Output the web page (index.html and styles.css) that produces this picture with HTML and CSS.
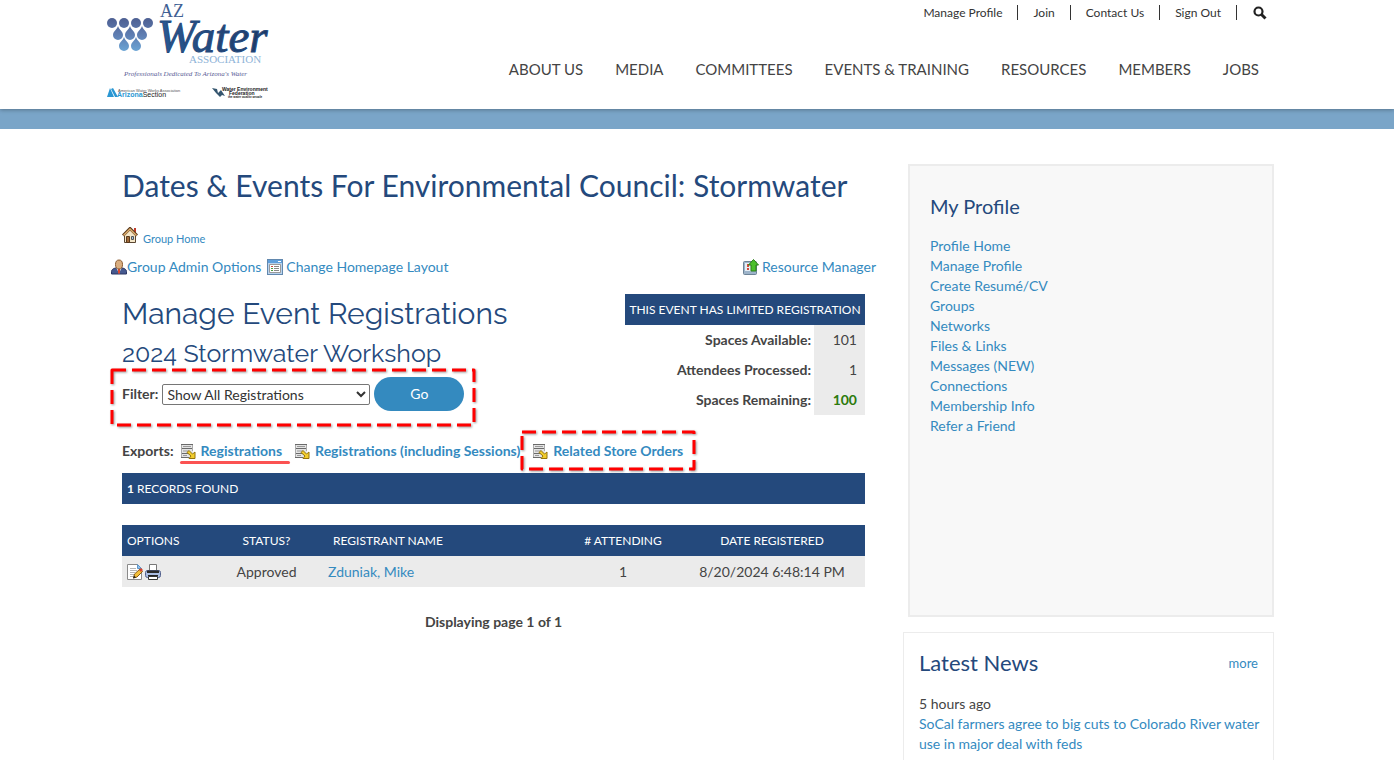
FILE: index.html
```html
<!DOCTYPE html>
<html lang="en">
<head>
    <meta charset="UTF-8">
    <meta name="viewport" content="width=device-width, initial-scale=1.0">
    <title>Manage Event Registrations - AZ Water Association</title>
    <link rel="stylesheet" href="styles.css">
</head>
<body>

    <!-- shared icons -->
    <svg class="sprite" width="0" height="0" aria-hidden="true">
        <defs>
            <linearGradient id="drop-grad" gradientUnits="userSpaceOnUse" x1="0" y1="18" x2="0" y2="52">
                <stop offset="0" stop-color="#4d5f92"/>
                <stop offset="0.5" stop-color="#5f7eb2"/>
                <stop offset="1" stop-color="#6ba6d6"/>
            </linearGradient>
            <linearGradient id="word-grad" x1="0" y1="0" x2="1" y2="0">
                <stop offset="0" stop-color="#2a5a94"/>
                <stop offset="1" stop-color="#1d3763"/>
            </linearGradient>
            <symbol id="icon-export" viewBox="0 0 16 16">
                <path d="M1 1h12v4H1zM1 6h12v4H1zM1 11h12v4H1z" fill="#e4e4e4"/>
                <path d="M1 1.500h12M1 5.500h12M1 10.500h10M1 14.500h8" stroke="#6a6a6a"/>
                <path d="M3 3.500h8M3 8h6M3 12.500h4" stroke="#999"/>
                <path d="M1.500 2v12M12.500 2v6" stroke="#aaa"/>
                <path d="M7 9.500l2-2 3.500 3.500 2.500-2v6.500H9l2-2.500z" fill="#f2cd2c" stroke="#94740c"/>
            </symbol>
        </defs>
    </svg>

    <header class="header">
        <div class="container header-inner">
            <a href="#" class="logo" aria-label="AZ Water Association">
                <svg width="162" height="98" viewBox="0 0 162 98">
                    <g fill="url(#drop-grad)">
                        <circle cx="5" cy="23" r="5"/>
                        <circle cx="17" cy="23" r="5"/>
                        <circle cx="29" cy="23" r="5"/>
                        <circle cx="41" cy="23" r="5"/>
                        <path d="M11 26c1 4 5 5 5 9a5 5 0 0 1-10 0c0-4 4-5 5-9z"/>
                        <path d="M23 26c1 4 5 5 5 9a5 5 0 0 1-10 0c0-4 4-5 5-9z"/>
                        <path d="M35 26c1 4 5 5 5 9a5 5 0 0 1-10 0c0-4 4-5 5-9z"/>
                        <path d="M17 37c1 4 5 5 5 9a5 5 0 0 1-10 0c0-4 4-5 5-9z"/>
                        <path d="M29 37c1 4 5 5 5 9a5 5 0 0 1-10 0c0-4 4-5 5-9z"/>
                    </g>
                    <text x="53" y="17" class="logo-az">AZ</text>
                    <text x="50" y="52" class="logo-water" fill="url(#word-grad)">Water</text>
                    <text x="82" y="63" class="logo-assoc">ASSOCIATION</text>
                    <text x="17" y="76" class="logo-tag">Professionals Dedicated To Arizona's Water</text>
                    <path d="M0 97l3-9 4 9zM4 89l2-1 5 9h-3z" fill="#2a97d3"/>
                    <text x="11" y="92" class="logo-tiny">American Water Works Association</text>
                    <text x="10" y="97" class="logo-section"><tspan class="logo-arizona">Arizona</tspan>Section</text>
                    <path d="M105 88l5 1 1 4 3-3 4 6-3-1-2 2-4-4z" fill="#35566f"/>
                    <text x="115" y="91" class="logo-wef">Water Environment</text>
                    <text x="122" y="95" class="logo-wef">Federation</text>
                    <text x="121" y="98" class="logo-wef-small">the water quality people</text>
                </svg>
            </a>

            <div class="header-menus">
                <nav class="top-links" aria-label="Account">
                    <a href="#">Manage Profile</a>
                    <a href="#">Join</a>
                    <a href="#">Contact Us</a>
                    <a href="#">Sign Out</a>
                    <button type="button" class="search-btn" aria-label="Search">
                        <svg width="14" height="14" viewBox="0 0 14 14" fill="none" stroke="#222">
                            <circle cx="5.500" cy="5.500" r="4" stroke-width="2.200"/>
                            <path d="M8.500 8.500l4 4" stroke-width="3"/>
                        </svg>
                    </button>
                </nav>
                <nav class="main-nav" aria-label="Main">
                    <a href="#">ABOUT US</a>
                    <a href="#">MEDIA</a>
                    <a href="#">COMMITTEES</a>
                    <a href="#">EVENTS &amp; TRAINING</a>
                    <a href="#">RESOURCES</a>
                    <a href="#">MEMBERS</a>
                    <a href="#">JOBS</a>
                </nav>
            </div>
        </div>
    </header>
    <div class="band"></div>

    <div class="container page">
        <main class="content">
            <h1>Dates &amp; Events For Environmental Council: Stormwater</h1>

            <a href="#" class="group-home">
                <svg class="icon" viewBox="0 0 16 16">
                    <path d="M12 1h2v6h-2z" fill="#c03a2b"/>
                    <path d="M2.500 8L8 3l5.500 5v7.500h-11z" fill="#f4e6c8" stroke="#5a4632"/>
                    <path d="M1 8.500L8 1.500l7 7" fill="none" stroke="#5a3a1c" stroke-width="3"/>
                    <path d="M1.500 8.500L8 2l6.500 6.500" fill="none" stroke="#e0b070" stroke-width="1.500"/>
                    <path d="M4.500 9.500h3v6h-3z" fill="#a06a3a" stroke="#5a3a1c"/>
                    <path d="M9.500 9.500h2v3h-2z" fill="#9cc4ec" stroke="#555"/>
                </svg>
                Group Home
            </a>

            <div class="toolbar">
                <a href="#" class="admin-link">
                    <svg class="icon" viewBox="0 0 16 16">
                        <path d="M0.500 15v-2.500c0-2 2-3 4-3.500h7c2 0.500 4 1.500 4 3.500V15z" fill="#46598f" stroke="#2b3663"/>
                        <path d="M5.500 9h5L8 14.500z" fill="#fff"/>
                        <path d="M8 9.500v5" stroke="#e0482c" stroke-width="2"/>
                        <ellipse cx="8" cy="5.500" rx="3.500" ry="4.500" fill="#d9ae80" stroke="#8a5a30"/>
                    </svg>Group Admin Options</a>
                <a href="#" class="layout-link">
                    <svg class="icon" viewBox="0 0 16 16">
                        <rect x="0.500" y="0.500" width="15" height="15" fill="#b9d3ee" stroke="#6288ae"/>
                        <path d="M1 1h14v3H1z" fill="#5f9fdc"/>
                        <path d="M11 2.500h3" stroke="#fff"/>
                        <path d="M2.500 5.500h11v8h-11z" fill="#fff" stroke="#9a9a9a"/>
                        <path d="M4 7.500h2" stroke="#d34a3a"/>
                        <path d="M4 9.500h2M4 11.500h2" stroke="#4b9c3c"/>
                        <path d="M7 7.500h5M7 9.500h5M7 11.500h5" stroke="#888"/>
                    </svg>Change Homepage Layout</a>
                <a href="#" class="resource-link">
                    <svg class="icon" viewBox="0 0 16 16">
                        <rect x="0.500" y="2.500" width="13" height="13" rx="1" fill="#9db4ca" stroke="#6d8397"/>
                        <path d="M2 4h8v8H2z" fill="#e7eef4"/>
                        <path d="M5 5v3M5 9v2" stroke="#d34a3a" stroke-width="2"/>
                        <path d="M10.500 0.500l5 5.500h-2.500v6h-5v-6h-2.500z" fill="#4cc02c" stroke="#2a7f18"/>
                    </svg>Resource Manager</a>
            </div>

            <div class="event-top">
                <div class="event-info">
                    <h2>Manage Event Registrations</h2>
                    <h3>2024 Stormwater Workshop</h3>
                    <form class="filter" onsubmit="return false">
                        <label for="filter">Filter:</label>
                        <select id="filter">
                            <option>Show All Registrations</option>
                            <option>Approved Registrations</option>
                            <option>Pending Registrations</option>
                        </select>
                        <button type="submit" class="go-btn">Go</button>
                        <svg class="marker marker-filter" aria-hidden="true"><rect x="2" y="2"/></svg>
                    </form>
                </div>

                <table class="spaces">
                    <thead>
                        <tr><th colspan="2">THIS EVENT HAS LIMITED REGISTRATION</th></tr>
                    </thead>
                    <tbody>
                        <tr><th scope="row">Spaces Available:</th><td>101</td></tr>
                        <tr><th scope="row">Attendees Processed:</th><td>1</td></tr>
                        <tr><th scope="row">Spaces Remaining:</th><td class="remaining">100</td></tr>
                    </tbody>
                </table>
            </div>

            <div class="exports">
                <span>Exports:</span>
                <a href="#" class="underlined"><svg class="icon"><use href="#icon-export"/></svg>Registrations</a>
                <a href="#"><svg class="icon"><use href="#icon-export"/></svg>Registrations (including Sessions)</a>
                <a href="#" class="orders"><svg class="icon"><use href="#icon-export"/></svg>Related Store Orders<svg class="marker marker-orders" aria-hidden="true"><rect x="2" y="2"/></svg></a>
            </div>

            <div class="records"><b>1</b> RECORDS FOUND</div>

            <table class="registrants">
                <thead>
                    <tr>
                        <th class="col-options">OPTIONS</th>
                        <th class="col-status">STATUS?</th>
                        <th class="col-name">REGISTRANT NAME</th>
                        <th class="col-attending"># ATTENDING</th>
                        <th class="col-date">DATE REGISTERED</th>
                    </tr>
                </thead>
                <tbody>
                    <tr>
                        <td class="col-options">
                            <div class="options">
                                <a href="#" aria-label="Edit">
                                    <svg class="icon" viewBox="0 0 16 16">
                                        <path d="M0.500 0.500h10l4 4v11h-14z" fill="#fff" stroke="#8a8a8a"/>
                                        <path d="M10.500 0.500v4h4z" fill="#8ec1ee" stroke="#5f95c8"/>
                                        <path d="M3 4.500h6M3 6.500h7M3 8.500h5M3 10.500h4M3 12.500h3" stroke="#b5b5b5"/>
                                        <path d="M6.500 14l1-4 5.500-5 2.500 2.500-5.500 5.500z" fill="#f3bf3a" stroke="#8a5a14"/>
                                        <path d="M12 6l2-2 2 2-2 2z" fill="#d9452e"/>
                                        <path d="M6 14.500l1-3 2 2z" fill="#222"/>
                                    </svg>
                                </a>
                                <a href="#" aria-label="Print">
                                    <svg class="icon" viewBox="0 0 16 16">
                                        <path d="M4.500 0.500h7v7h-7z" fill="#fff" stroke="#777"/>
                                        <rect x="0.500" y="6.500" width="15" height="7" rx="2" fill="#a9bce2" stroke="#53618c"/>
                                        <path d="M2 6.500h12v2.500H2z" fill="#2a2a2a"/>
                                        <path d="M3 11h10v1.500H3z" fill="#222"/>
                                        <path d="M3.500 12.500h9v3h-9z" fill="#fff" stroke="#333"/>
                                    </svg>
                                </a>
                            </div>
                        </td>
                        <td class="col-status">Approved</td>
                        <td class="col-name"><a href="#">Zduniak, Mike</a></td>
                        <td class="col-attending">1</td>
                        <td class="col-date">8/20/2024 6:48:14 PM</td>
                    </tr>
                </tbody>
            </table>

            <p class="paging">Displaying page 1 of 1</p>
        </main>

        <aside class="sidebar">
            <section class="profile">
                <h4>My Profile</h4>
                <ul>
                    <li><a href="#">Profile Home</a></li>
                    <li><a href="#">Manage Profile</a></li>
                    <li><a href="#">Create Resumé/CV</a></li>
                    <li><a href="#">Groups</a></li>
                    <li><a href="#">Networks</a></li>
                    <li><a href="#">Files &amp; Links</a></li>
                    <li><a href="#">Messages (NEW)</a></li>
                    <li><a href="#">Connections</a></li>
                    <li><a href="#">Membership Info</a></li>
                    <li><a href="#">Refer a Friend</a></li>
                </ul>
            </section>

            <section class="news">
                <div class="news-head">
                    <h4>Latest News</h4>
                    <a href="#">more</a>
                </div>
                <div>5 hours ago</div>
                <a href="#">SoCal farmers agree to big cuts to Colorado River water use in major deal with feds</a>
            </section>
        </aside>
    </div>

</body>
</html>
```
FILE: styles.css
```css
* {
    box-sizing: border-box;
}

body {
    margin: 0;
    font-family: Lato, "Liberation Sans", sans-serif;
    font-size: 14px;
    line-height: 20px;
    color: #444;
    background-color: #fff;
}

a {
    color: #348abf;
    text-decoration: none;
}

h1, h2, h3, h4 {
    margin: 0;
    font-weight: 400;
    color: #24497c;
}

.sprite {
    display: block;
}

.icon {
    width: 16px;
    height: 16px;
    flex: none;
}

.container {
    max-width: 1180px;
    margin: 0 auto;
}

/* header */
.header {
    position: relative;
    box-shadow: 0 1px 4px rgba(0, 0, 0, 0.3);
}

.header-inner {
    display: flex;
    justify-content: space-between;
    height: 109px;
    padding-right: 20px;
}

.logo svg {
    display: block;
}

.logo-az {
    font: 18px "Liberation Serif", serif;
    fill: #3f5f94;
}

.logo-water {
    font: italic 47px "Liberation Serif", serif;
    stroke: #24497c;
}

.logo-assoc {
    font: 11px "Liberation Serif", serif;
    fill: #8fb4d8;
}

.logo-tag {
    font: italic 7px "Liberation Serif", serif;
    fill: #5a6096;
}

.logo-tiny {
    font: 4px "Liberation Sans", sans-serif;
    fill: #555;
}

.logo-section {
    font: 7px "Liberation Sans", sans-serif;
    fill: #222;
}

.logo-arizona {
    font-weight: bold;
    fill: #2a97d3;
}

.logo-wef {
    font: bold 5px "Liberation Sans", sans-serif;
    fill: #222;
}

.logo-wef-small {
    font: bold 3px "Liberation Sans", sans-serif;
    fill: #222;
}

.header-menus {
    display: flex;
    flex-direction: column;
    align-items: flex-end;
}

.top-links {
    display: flex;
    align-items: center;
    padding-top: 5px;
    font-size: 12px;
    line-height: 15px;
}

.top-links a {
    padding: 0 15px;
    color: #333;
    border-right: 1px solid #333;
}

.search-btn {
    padding: 0 0 0 16px;
    border: 0;
    background: none;
    cursor: pointer;
}

.search-btn svg {
    display: block;
}

.main-nav {
    display: flex;
    gap: 32px;
    margin-top: 39px;
    padding-right: 8px;
    font-size: 15px;
}

.main-nav a {
    color: #444;
}

.band {
    height: 20px;
    background-color: #7aa5c8;
}

/* page columns */
.page {
    display: flex;
    gap: 27px;
    padding-right: 13px;
}

.content {
    flex: 1;
    padding: 36px 0 0 15px;
}

h1 {
    font-size: 30px;
    line-height: 40px;
}

.group-home {
    display: flex;
    gap: 5px;
    margin-top: 22px;
    font-size: 11px;
    line-height: 24px;
}

.toolbar {
    display: flex;
    margin: 6px 0 0 -11px;
}

.toolbar a {
    display: flex;
    align-items: center;
}

.layout-link {
    gap: 3px;
    margin-left: 6px;
}

.resource-link {
    gap: 3px;
    margin-left: auto;
}

.event-top {
    display: flex;
    justify-content: space-between;
    margin: 17px 11px 0 0;
}

h2 {
    font-family: Raleway, Lato, sans-serif;
    font-size: 30px;
    line-height: 40px;
}

h3 {
    font-family: Raleway, Lato, sans-serif;
    font-size: 25px;
    line-height: 38px;
}

.filter {
    position: relative;
    display: flex;
    align-items: center;
    gap: 4px;
    margin-top: 5px;
}

.filter label {
    font-weight: bold;
}

.filter select {
    width: 208px;
    height: 21px;
    padding: 0;
    border: 1px solid #767676;
    border-radius: 2px;
    font: inherit;
    color: #333;
    background-color: #fff;
}

.go-btn {
    width: 90px;
    height: 34px;
    border: 0;
    border-radius: 17px;
    font: inherit;
    color: #fff;
    background-color: #348abf;
    cursor: pointer;
}

/* red dashed callouts */
.marker {
    position: absolute;
    filter: drop-shadow(1px 1px 1px rgba(0, 0, 0, 0.4));
}

.marker rect {
    width: calc(100% - 5px);
    height: calc(100% - 5px);
    fill: none;
    stroke: #f00;
    stroke-width: 3px;
    stroke-dasharray: 14px 6px;
    stroke-linejoin: round;
}

.marker-filter {
    top: -9px;
    left: -12px;
    width: 367px;
    height: 60px;
}

.marker-orders {
    top: -11px;
    left: -12px;
    width: 177px;
    height: 42px;
}

.spaces {
    width: 240px;
    border-collapse: collapse;
    text-align: right;
}

.spaces th {
    padding: 5px 3px;
}

.spaces thead th {
    height: 31px;
    padding: 0;
    font-size: 12px;
    font-weight: 400;
    text-align: center;
    color: #fff;
    background-color: #24497c;
}

.spaces td {
    width: 51px;
    padding: 5px 8px;
    background-color: #ebebeb;
}

.spaces .remaining {
    font-weight: bold;
    color: #2c7a0c;
}

.exports {
    display: flex;
    gap: 12px;
    margin-top: 26px;
    font-weight: bold;
    white-space: nowrap;
}

.exports span {
    margin-right: -6px;
}

.exports a {
    position: relative;
    display: flex;
    align-items: center;
    gap: 5px;
}

.underlined::after {
    content: "";
    position: absolute;
    top: 20px;
    left: 0;
    width: 110px;
    height: 3px;
    border-radius: 2px;
    background-color: #fb5252;
}

.records {
    margin: 12px 11px 21px 0;
    padding: 0 5px;
    font-size: 12px;
    line-height: 31px;
    color: #fff;
    background-color: #24497c;
}

.registrants {
    width: calc(100% - 11px);
    border-collapse: collapse;
    table-layout: fixed;
    text-align: center;
}

.registrants th {
    height: 31px;
    padding: 0;
    font-size: 12px;
    font-weight: 400;
    color: #fff;
    background-color: #24497c;
}

.registrants td {
    height: 31px;
    padding: 0;
    background-color: #ebebeb;
}

.registrants .col-options {
    width: 94px;
    padding-left: 5px;
    text-align: left;
}

.registrants .col-status {
    width: 101px;
}

.registrants .col-name {
    padding-left: 11px;
    text-align: left;
}

.registrants th.col-name {
    padding-left: 16px;
}

.registrants .col-attending {
    width: 112px;
}

.registrants .col-date {
    width: 186px;
}

.options {
    display: flex;
    gap: 2px;
}

.options svg {
    display: block;
}

.paging {
    margin: 25px 11px 0 0;
    font-weight: bold;
    text-align: center;
}

/* sidebar */
.sidebar {
    width: 371px;
    padding-top: 35px;
}

h4 {
    font-size: 20px;
    line-height: 24px;
}

.profile {
    min-height: 453px;
    margin: 0 0 15px 5px;
    padding: 28px 20px;
    border: 2px solid #ececec;
    background-color: #f8f8f8;
}

.profile ul {
    margin: 18px 0 0;
    padding: 0;
    list-style: none;
}

.news {
    padding: 18px 8px 18px 15px;
    border: 1px solid #ececec;
}

.news-head {
    display: flex;
    justify-content: space-between;
    align-items: center;
    margin: 0 7px 19px 0;
    font-size: 13px;
}

.news h4 {
    font-size: 22px;
}
```
